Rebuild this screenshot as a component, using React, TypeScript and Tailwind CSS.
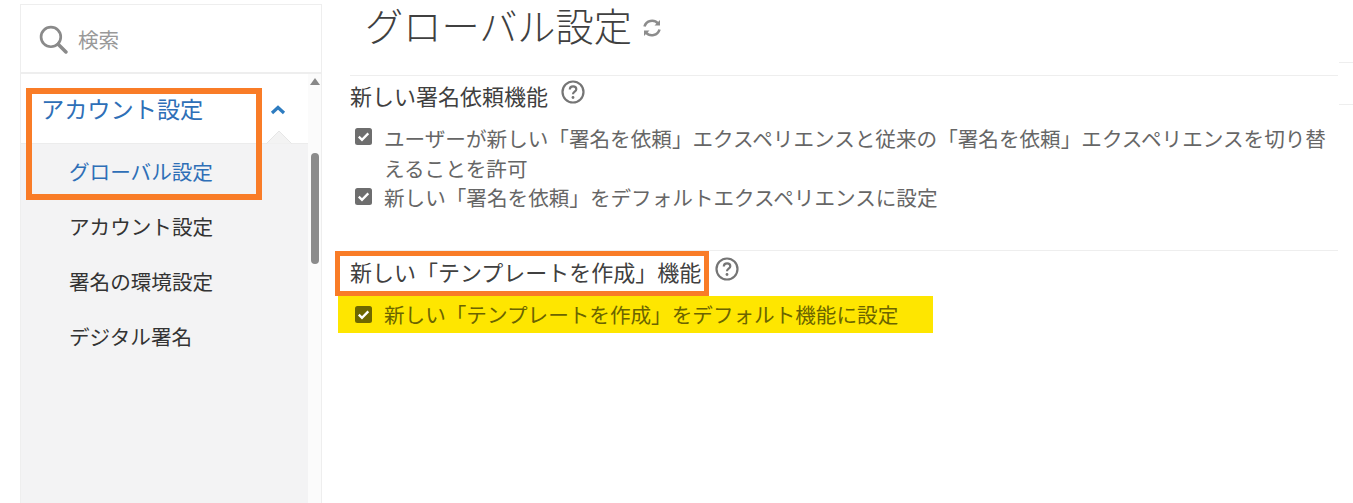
const font = { fontFamily: '"Noto Sans CJK JP", "Noto Sans", sans-serif' };

function HelpIcon() {
  return (
    <svg width="24" height="24" viewBox="0 0 24 24" fill="none" className="shrink-0">
      <circle cx="12" cy="12" r="10.500" stroke="#757575" strokeWidth="2.200" />
      <path d="M8.800 9.600c0-2 1.400-3.200 3.300-3.200 1.800 0 3.200 1.100 3.200 2.800 0 2.500-3.300 2.500-3.300 5" stroke="#757575" strokeWidth="2.200" />
      <circle cx="12" cy="17.500" r="1.400" fill="#757575" />
    </svg>
  );
}

function Check({ color = "#6e6e6e" }: { color?: string }) {
  return (
    <svg width="17" height="17" viewBox="0 0 17 17" className="shrink-0">
      <rect width="17" height="17" rx="2.500" fill={color} />
      <path d="M3.800 8.600 7 11.800 13.300 5.400" fill="none" stroke="#fff" strokeWidth="2.300" />
    </svg>
  );
}

function SubItem({ label, active }: { label: string; active?: boolean }) {
  return (
    <div className={`h-[55px] flex items-center pl-[48px] text-[20.6px] ${active ? "text-[#2e6fb7]" : "text-[#333]"}`}>
      {label}
    </div>
  );
}

export default function App() {
  return (
    <div className="h-[503px] w-[1353px] overflow-hidden bg-white flex pl-[20px] pt-[4px]" style={font}>
      <aside className="relative w-[302px] shrink-0 border border-[#eeeeee] border-b-0">
        <div className="h-[69px] flex items-center pl-[18px] gap-[10px] pt-[2px] border-b-2 border-[#eeeeee]">
          <svg width="29" height="29" viewBox="0 0 28 28" fill="none">
            <circle cx="11.500" cy="11.500" r="9.500" stroke="#8a8a8a" strokeWidth="2.600" />
            <path d="M18.500 18.500 26 26" stroke="#8a8a8a" strokeWidth="3.400" strokeLinecap="round" />
          </svg>
          <span className="text-[20.6px] text-[#999]">検索</span>
        </div>
        <div className="flex h-[430px]">
          <nav className="w-[287px] shrink-0">
            <div className="relative h-[69px] flex items-start pl-[20px] pt-[16px]">
              <span className="text-[23.2px] leading-[36px] text-[#2e6fb7]">アカウント設定</span>
              <svg width="16" height="10" viewBox="0 0 16 10" fill="none" className="absolute left-[249px] top-[31px]">
                <path d="M2 8 8 2.500 14 8" stroke="#2e7cc0" strokeWidth="3.200" />
              </svg>
              <svg width="26" height="14" viewBox="0 0 26 14" fill="none" className="absolute left-[245px] bottom-[-1px]">
                <path d="M0 13.500h0.500L13 1l12.500 12.500h0.500" fill="#f3f3f3" stroke="#e6e6e6" />
              </svg>
            </div>
            <div className="bg-[#f3f3f4] h-[361px] border-t border-[#ececec]">
              <SubItem label="グローバル設定" active />
              <SubItem label="アカウント設定" />
              <SubItem label="署名の環境設定" />
              <SubItem label="デジタル署名" />
            </div>
          </nav>
          <div className="relative flex-1 bg-[#fbfbfb]">
            <div className="absolute left-[2px] top-[4px] w-0 h-0 border-x-[5px] border-x-transparent border-b-[7px] border-b-[#888]" />
            <div className="absolute left-[3px] top-[79px] w-[8px] h-[111px] rounded-full bg-[#8b8b8b]" />
          </div>
        </div>
        <div className="absolute left-[5px] top-[83px] w-[236px] h-[112px] border-[6px] border-[#f97c27]" />
      </aside>

      <main className="relative flex-1 pl-[28px] min-w-0">
        <div className="pl-[15px] h-[71px] flex items-start gap-[9px]">
          <h1 className="text-[38.2px] leading-[42px] font-light text-[#404040]">グローバル設定</h1>
          <svg width="22" height="22" viewBox="0 0 22 22" fill="none" className="mt-[13px]">
            <path d="M3.500 9.500A7.800 7.800 0 0 1 17 6.500" stroke="#8c8c8c" strokeWidth="2.600" />
            <path d="M18.500 12.500A7.800 7.800 0 0 1 5 15.500" stroke="#8c8c8c" strokeWidth="2.600" />
            <path d="M19 3v5.500h-5.500z" fill="#8c8c8c" />
            <path d="M3 19v-5.500h5.500z" fill="#8c8c8c" />
          </svg>
        </div>

        <section className="w-[988px] border-t border-[#eeeeee] h-[175px]">
          <div className="flex items-center gap-[13px] h-[38px]">
            <h2 className="text-[22px] leading-[38px] text-[#404040]">新しい署名依頼機能</h2>
            <span className="-mt-[6px]"><HelpIcon /></span>
          </div>
          <div className="mt-[10px] flex flex-col text-[20.6px] leading-[29.500px] text-[#666]">
            <div className="flex gap-[12px] ml-[5px]">
              <span className="pt-[4px]"><Check /></span>
              <p className="w-[960px]">ユーザーが新しい「署名を依頼」エクスペリエンスと従来の「署名を依頼」エクスペリエンスを切り替えることを許可</p>
            </div>
            <div className="flex gap-[12px] ml-[5px]">
              <span className="pt-[5px]"><Check /></span>
              <p>新しい「署名を依頼」をデフォルトエクスペリエンスに設定</p>
            </div>
          </div>
        </section>

        <section className="w-[988px] border-t border-[#eeeeee]">
          <div className="flex items-center h-[40px]">
            <h2 className="text-[22px] leading-[40px] text-[#404040] whitespace-nowrap">新しい「テンプレートを作成」機能</h2>
            <span className="ml-[14px] -mt-[5px]"><HelpIcon /></span>
          </div>
          <div className="mt-[5px] -ml-[12px] w-[595px] h-[37px] bg-[#fee600] flex items-center gap-[12px] pl-[17px] text-[20.6px] text-[#6b6400]">
            <span className="-mt-[1px]"><Check color="#6e6700" /></span>
            <span className="whitespace-nowrap">新しい「テンプレートを作成」をデフォルト機能に設定</span>
          </div>
        </section>

        <div className="absolute right-0 top-[58px] w-[14px] border-t border-[#eeeeee]" />
        <div className="absolute right-0 top-[100px] w-[14px] border-t border-[#eeeeee]" />
        <div className="absolute left-[13px] top-[247px] w-[374px] h-[45px] border-[5px] border-[#f97c27]" />
      </main>
    </div>
  );
}
